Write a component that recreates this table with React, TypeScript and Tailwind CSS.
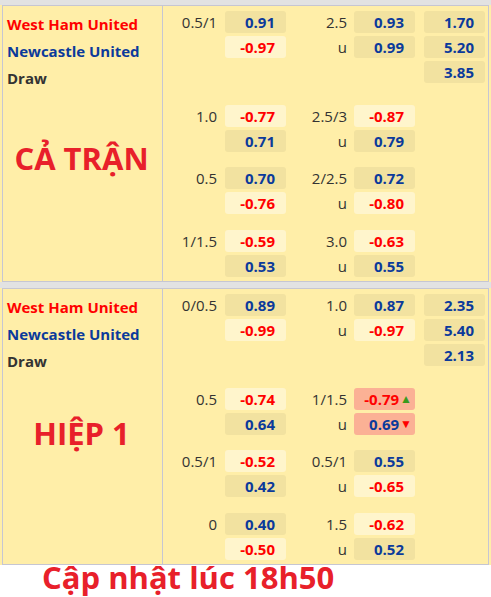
type Tone = "dark" | "light" | "hot";
type Cell = { v: string; tone: Tone; red?: boolean; arrow?: "up" | "down" };

interface RowData {
  h?: string;
  a?: Cell;
  ou?: string;
  b?: Cell;
  x?: string;
}

interface Group {
  mt: string;
  rows: RowData[];
}

const FONT = { fontFamily: '"Open Sans", "Noto Sans", sans-serif' };

const d = (v: string, red = false): Cell => ({ v, tone: "dark", red });
const l = (v: string, red = true): Cell => ({ v, tone: "light", red });

const FULL: Group[] = [
  {
    mt: "mt-[5px]",
    rows: [
      { h: "0.5/1", a: d("0.91"), ou: "2.5", b: d("0.93"), x: "1.70" },
      { a: l("-0.97"), ou: "u", b: d("0.99"), x: "5.20" },
      { x: "3.85" },
    ],
  },
  {
    mt: "mt-[22px]",
    rows: [
      { h: "1.0", a: l("-0.77"), ou: "2.5/3", b: l("-0.87") },
      { a: d("0.71"), ou: "u", b: d("0.79") },
    ],
  },
  {
    mt: "mt-[15px]",
    rows: [
      { h: "0.5", a: d("0.70"), ou: "2/2.5", b: d("0.72") },
      { a: l("-0.76"), ou: "u", b: l("-0.80") },
    ],
  },
  {
    mt: "mt-[16px]",
    rows: [
      { h: "1/1.5", a: l("-0.59"), ou: "3.0", b: l("-0.63") },
      { a: d("0.53"), ou: "u", b: d("0.55") },
    ],
  },
];

const HALF: Group[] = [
  {
    mt: "mt-[5px]",
    rows: [
      { h: "0/0.5", a: d("0.89"), ou: "1.0", b: d("0.87"), x: "2.35" },
      { a: l("-0.99"), ou: "u", b: l("-0.97"), x: "5.40" },
      { x: "2.13" },
    ],
  },
  {
    mt: "mt-[22px]",
    rows: [
      { h: "0.5", a: l("-0.74"), ou: "1/1.5", b: { v: "-0.79", tone: "hot", red: true, arrow: "up" } },
      { a: d("0.64"), ou: "u", b: { v: "0.69", tone: "hot", arrow: "down" } },
    ],
  },
  {
    mt: "mt-[15px]",
    rows: [
      { h: "0.5/1", a: l("-0.52"), ou: "0.5/1", b: d("0.55") },
      { a: d("0.42"), ou: "u", b: l("-0.65") },
    ],
  },
  {
    mt: "mt-[16px]",
    rows: [
      { h: "0", a: d("0.40"), ou: "1.5", b: l("-0.62") },
      { a: l("-0.50"), ou: "u", b: d("0.52") },
    ],
  },
];

function OddBox({ cell }: { cell?: Cell }) {
  if (!cell) return <div className="w-[61px]" />;
  const bg =
    cell.tone === "dark" ? "bg-[#f2e2a0]" : cell.tone === "light" ? "bg-[#fff5cc]" : "bg-[#fbb195]";
  return (
    <div
      className={`flex h-[22px] w-[61px] items-center justify-end rounded-[3px] text-[15px] font-bold ${bg} ${
        cell.arrow ? "pr-[3px]" : "pr-[11px]"
      } ${cell.red ? "text-[#ff0000]" : "text-[#0b3a9b]"}`}
    >
      {cell.v}
      {cell.arrow === "up" && <span className="ml-[1px] text-[12px] leading-none text-[#3a9a1e]">▲</span>}
      {cell.arrow === "down" && <span className="ml-[1px] text-[12px] leading-none text-[#ff0000]">▼</span>}
    </div>
  );
}

function OddsRow({ row, first }: { row: RowData; first: boolean }) {
  return (
    <div className={`flex h-[22px] items-center text-[15px] text-[#333] ${first ? "" : "mt-[3px]"}`}>
      <div className="w-[54px] text-right">{row.h}</div>
      <div className="ml-[8px]">
        <OddBox cell={row.a} />
      </div>
      <div className="w-[61px] text-right">{row.ou}</div>
      <div className="ml-[7px]">
        <OddBox cell={row.b} />
      </div>
      <div className="ml-[9px]">
        {row.x ? <OddBox cell={{ v: row.x, tone: "dark" }} /> : <div className="w-[61px]" />}
      </div>
    </div>
  );
}

function Section({ title, titleMt, groups }: { title: string; titleMt: string; groups: Group[] }) {
  return (
    <div className="ml-[2px] flex w-[487px] border border-[#c6c6d2] bg-[#ffeea8]">
      <div className="w-[160px] shrink-0 border-r border-[#c6c6d2] pt-[5px] pl-[4px]">
        <div className="text-[15px] font-bold leading-[27px] text-[#ff0000]">West Ham United</div>
        <div className="text-[15px] font-bold leading-[27px] text-[#0b3a9b]">Newcastle United</div>
        <div className="text-[15px] font-bold leading-[27px] text-[#333]">Draw</div>
        <div className={`${titleMt} pr-[6px] text-center text-[31px] font-bold leading-[36px] text-[#e8202a]`}>
          {title}
        </div>
      </div>
      <div className="pb-[4px]">
        {groups.map((g, gi) => (
          <div key={gi} className={g.mt}>
            {g.rows.map((r, ri) => (
              <OddsRow key={ri} row={r} first={ri === 0} />
            ))}
          </div>
        ))}
      </div>
    </div>
  );
}

export default function App() {
  return (
    <div className="h-[597px] w-[491px] overflow-hidden bg-white" style={FONT}>
      <div className="bg-[#ffeea8]">
        <div className="h-[5px] bg-[#e2e2e2]" />
        <Section title="CẢ TRẬN" titleMt="mt-[48px]" groups={FULL} />
        <div className="h-[6px] bg-[#e2e2e2]" />
        <Section title="HIỆP 1" titleMt="mt-[40px]" groups={HALF} />
      </div>
      <div className="pl-[42px] text-[31px] font-bold leading-[24px] text-[#e8202a]">Cập nhật lúc 18h50</div>
    </div>
  );
}
